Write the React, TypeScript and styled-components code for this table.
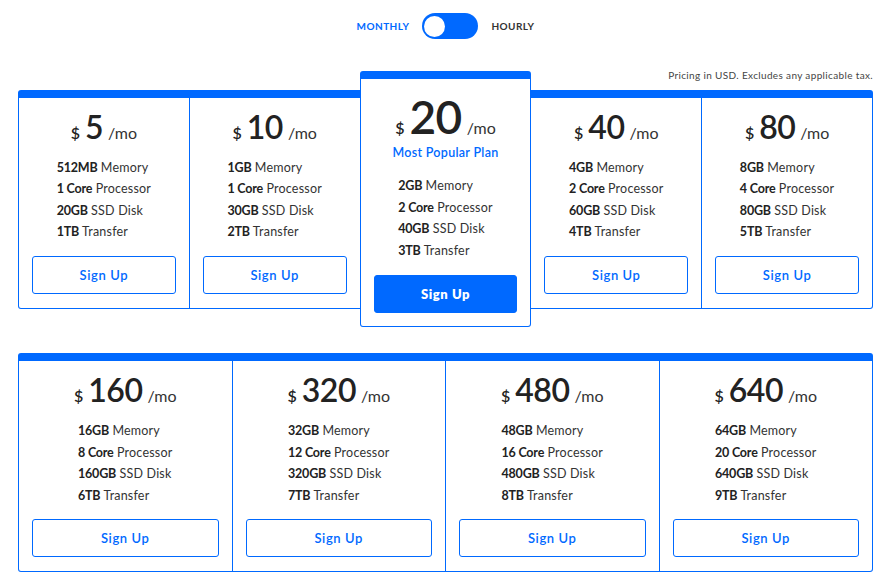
import React from "react";
import styled, { createGlobalStyle } from "styled-components";

const BLUE = "#0069ff";

const Global = createGlobalStyle`
  html, body { margin: 0; padding: 0; background: #fff; }
  body { font-family: "Lato", "Open Sans", sans-serif; color: #222; }
  * { box-sizing: border-box; }
`;

const Page = styled.div`
  padding: 13px 18px 0;
  width: 891px;
`;

const ToggleRow = styled.div`
  display: flex;
  justify-content: center;
  align-items: center;
  gap: 13px;
  height: 26px;
`;

const ToggleLabel = styled.span<{ $active?: boolean }>`
  font-size: 10px;
  font-weight: 700;
  letter-spacing: 0.45px;
  color: ${(p) => (p.$active ? BLUE : "#333")};
`;

const Switch = styled.div`
  width: 56px;
  height: 26px;
  border-radius: 13px;
  background: ${BLUE};
  display: flex;
  align-items: center;
  padding-left: 2px;
`;

const Knob = styled.div`
  width: 21px;
  height: 21px;
  border-radius: 50%;
  background: #fff;
`;

const Note = styled.div`
  text-align: right;
  font-size: 10px;
  color: #444;
  letter-spacing: 0.35px;
  line-height: 12px;
  margin-top: 30px;
  margin-bottom: -10px;
`;

const Row = styled.div<{ $gap?: number }>`
  display: flex;
  align-items: center;
  margin-top: ${(p) => p.$gap ?? 0}px;
`;

const Card = styled.div<{ $popular?: boolean }>`
  flex: 1;
  min-width: 0;
  display: flex;
  flex-direction: column;
  align-items: stretch;
  background: #fff;
  border: 1px solid ${BLUE};
  border-top: 8px solid ${BLUE};
  padding: 0 13px ${(p) => (p.$popular ? 13 : 14)}px;
  border-radius: ${(p) => (p.$popular ? "3px" : "0")};
  position: relative;
  z-index: ${(p) => (p.$popular ? 1 : 0)};
  & + & {
    margin-left: -1px;
  }
  &:first-child {
    border-top-left-radius: 3px;
    border-bottom-left-radius: 3px;
  }
  &:last-child {
    border-top-right-radius: 3px;
    border-bottom-right-radius: 3px;
  }
`;

const Price = styled.div<{ $popular?: boolean }>`
  display: flex;
  justify-content: center;
  align-items: baseline;
  gap: 5px;
  height: ${(p) => (p.$popular ? 44 : 34)}px;
  line-height: ${(p) => (p.$popular ? 44 : 34)}px;
  margin-top: ${(p) => (p.$popular ? 16 : 12)}px;
`;

const Dollar = styled.span`
  font-size: 16px;
  font-weight: 600;
  color: #222;
`;

const Amount = styled.span<{ $popular?: boolean }>`
  font-size: ${(p) => (p.$popular ? 46 : 32)}px;
  font-weight: 600;
  color: #222;
  letter-spacing: -0.5px;
`;

const Per = styled.span`
  font-size: 16px;
  font-weight: 400;
  color: #333;
`;

const Popular = styled.div`
  text-align: center;
  color: ${BLUE};
  font-size: 12.5px;
  font-weight: 600;
  letter-spacing: 0.3px;
  line-height: 16px;
  margin-top: 6px;
`;

const Features = styled.ul<{ $gap: number }>`
  list-style: none;
  padding: 0;
  margin: ${(p) => p.$gap}px 0 0;
  align-self: center;
  text-align: left;
`;

const Feature = styled.li`
  font-size: 12.5px;
  line-height: 21.5px;
  color: #333;
  letter-spacing: 0.2px;
  white-space: nowrap;
  b {
    font-weight: 700;
    color: #222;
    letter-spacing: -0.2px;
  }
`;

const Button = styled.button<{ $primary?: boolean; $gap: number }>`
  height: 38px;
  margin-top: ${(p) => p.$gap}px;
  border: 1px solid ${BLUE};
  border-radius: 3px;
  background: ${(p) => (p.$primary ? BLUE : "#fff")};
  color: ${(p) => (p.$primary ? "#fff" : BLUE)};
  font-family: inherit;
  font-size: 13px;
  font-weight: ${(p) => (p.$primary ? 800 : 600)};
  letter-spacing: 0.6px;
  cursor: pointer;
`;

type Plan = {
  price: number;
  mem: string;
  cores: number;
  disk: string;
  transfer: string;
  popular?: boolean;
};

const row1: Plan[] = [
  { price: 5, mem: "512MB", cores: 1, disk: "20GB", transfer: "1TB" },
  { price: 10, mem: "1GB", cores: 1, disk: "30GB", transfer: "2TB" },
  { price: 20, mem: "2GB", cores: 2, disk: "40GB", transfer: "3TB", popular: true },
  { price: 40, mem: "4GB", cores: 2, disk: "60GB", transfer: "4TB" },
  { price: 80, mem: "8GB", cores: 4, disk: "80GB", transfer: "5TB" },
];

const row2: Plan[] = [
  { price: 160, mem: "16GB", cores: 8, disk: "160GB", transfer: "6TB" },
  { price: 320, mem: "32GB", cores: 12, disk: "320GB", transfer: "7TB" },
  { price: 480, mem: "48GB", cores: 16, disk: "480GB", transfer: "8TB" },
  { price: 640, mem: "64GB", cores: 20, disk: "640GB", transfer: "9TB" },
];

const PlanCard = ({ plan }: { plan: Plan }) => {
  const p = !!plan.popular;
  return (
    <Card $popular={p}>
      <Price $popular={p}>
        <Dollar>$</Dollar>
        <Amount $popular={p}>{plan.price}</Amount>
        <Per>/mo</Per>
      </Price>
      {p && <Popular>Most Popular Plan</Popular>}
      <Features $gap={p ? 14 : 13}>
        <Feature>
          <b>{plan.mem}</b> Memory
        </Feature>
        <Feature>
          <b>{plan.cores} Core</b> Processor
        </Feature>
        <Feature>
          <b>{plan.disk}</b> SSD Disk
        </Feature>
        <Feature>
          <b>{plan.transfer}</b> Transfer
        </Feature>
      </Features>
      <Button $primary={p} $gap={p ? 14 : 13}>
        Sign Up
      </Button>
    </Card>
  );
};

export default function App() {
  return (
    <Page>
      <Global />
      <ToggleRow>
        <ToggleLabel $active>MONTHLY</ToggleLabel>
        <Switch>
          <Knob />
        </Switch>
        <ToggleLabel>HOURLY</ToggleLabel>
      </ToggleRow>
      <Note>Pricing in USD. Excludes any applicable tax.</Note>
      <Row>
        {row1.map((pl) => (
          <PlanCard key={pl.price} plan={pl} />
        ))}
      </Row>
      <Row $gap={26}>
        {row2.map((pl) => (
          <PlanCard key={pl.price} plan={pl} />
        ))}
      </Row>
    </Page>
  );
}
